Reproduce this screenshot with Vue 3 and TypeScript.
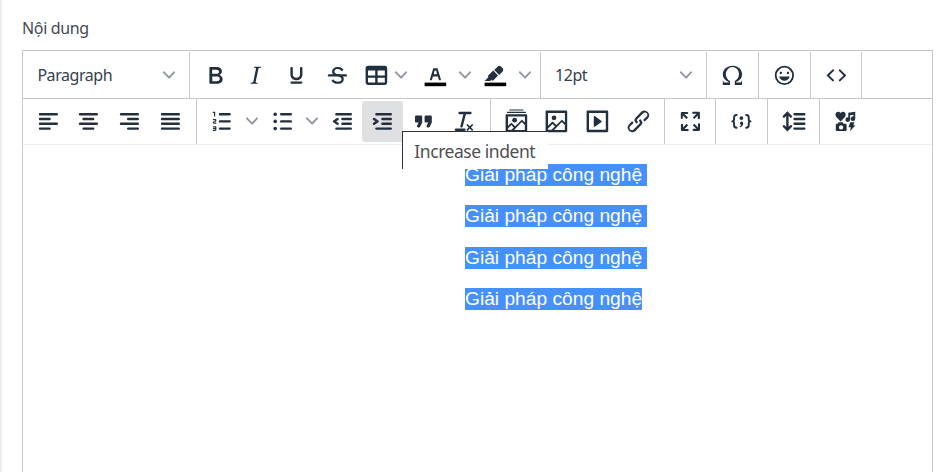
<script setup lang="ts">
interface Tool {
  kind: 'button' | 'split' | 'menu' | 'select'
  icon?: string
  label?: string
  active?: boolean
}

const icons: Record<string, string> = {
  bold: '<path d="M7.8 19c-.3 0-.5 0-.6-.2l-.2-.5V5.7c0-.2 0-.4.2-.5l.6-.2h5c1.5 0 2.7.3 3.5 1 .7.6 1.1 1.4 1.1 2.5a3 3 0 01-.6 1.9c-.4.6-1 1-1.6 1.2.4.1.9.3 1.3.6s.8.7 1 1.2c.4.4.5 1 .5 1.6 0 1.3-.4 2.3-1.3 3-.8.7-2.1 1-3.8 1H7.8zm5-8.3c.6 0 1.2-.1 1.6-.5.4-.3.6-.7.6-1.3 0-1.1-.8-1.7-2.3-1.7H9.3v3.5h3.4zm.5 6c.7 0 1.3-.1 1.7-.4.4-.4.6-.9.6-1.5s-.2-1-.7-1.4c-.4-.3-1-.4-2-.4H9.4v3.8h4z"/>',
  italic: '<path d="M16.7 4.7l-.1.9h-.3c-.6 0-1 0-1.4.3-.3.3-.4.6-.5 1.1l-2.1 9.8v.6c0 .5.4.8 1.4.8h.2l-.2.8H8l.2-.8h.2c1.1 0 1.8-.5 2-1.5l2-9.8.1-.5c0-.6-.4-.8-1.4-.8h-.3l.2-.9h5.8z"/>',
  underline: '<path d="M16 5c.6 0 1 .4 1 1v5.5a4 4 0 01-.4 1.8l-1 1.4a5.3 5.3 0 01-5.5 1 5 5 0 01-1.6-1c-.5-.4-.8-.9-1.1-1.4a4 4 0 01-.4-1.8V6c0-.6.4-1 1-1s1 .4 1 1v5.5c0 .3 0 .6.2 1l.6.7a3.3 3.3 0 002.2.8 3.4 3.4 0 002.2-.8c.3-.2.4-.5.6-.8l.2-.9V6c0-.6.4-1 1-1zM8 17h8c.6 0 1 .4 1 1s-.4 1-1 1H8a1 1 0 010-2z"/>',
  strike: '<path d="M15.6 8.5c-.5-.7-1-1.1-1.3-1.3-.6-.4-1.3-.6-2-.6-2.7 0-2.8 1.7-2.8 2.1 0 1.6 1.8 2 3.2 2.3 4.4.9 4.6 2.8 4.6 3.9 0 1.4-.7 4.1-5 4.1A6.2 6.2 0 017 16.4l1.5-1.1c.4.6 1.6 2 3.7 2 1.6 0 2.5-.4 3-1.2.4-.8.3-2-.8-2.6-.7-.4-1.6-.7-2.9-1-1-.2-3.9-.8-3.9-3.6C7.6 6 10.3 5 12.4 5c2.9 0 4.2 1.6 4.7 2.4l-1.5 1.1z"/><path d="M5 11h14a1 1 0 010 2H5a1 1 0 010-2z"/>',
  table: '<path d="M19 4a2 2 0 012 2v12a2 2 0 01-2 2H5a2 2 0 01-2-2V6c0-1.1.9-2 2-2h14zM5 14v4h6v-4H5zm14 0h-6v4h6v-4zm0-6h-6v4h6V8zM5 12h6V8H5v4z"/>',
  textColor: '<path fill="#000" d="M3 18h18v3H3z"/><path d="M8.7 16h-.8a.5.5 0 01-.5-.6l2.7-9c.1-.3.3-.4.5-.4h2.8c.2 0 .4.1.5.4l2.7 9a.5.5 0 01-.5.6h-.8a.5.5 0 01-.4-.4l-.7-2.2c0-.3-.3-.4-.5-.4h-3.4c-.2 0-.4.1-.5.4l-.7 2.2c0 .3-.2.4-.4.4zm2.6-7.6l-.6 2a.5.5 0 00.5.6h1.6a.5.5 0 00.5-.6l-.6-2c0-.3-.3-.4-.5-.4h-.4c-.2 0-.4.1-.5.4z"/>',
  highlight: '<path fill="#000" d="M3 18h18v3H3z"/><path d="M7.7 16.7H3l3.3-3.3-.7-.8L10.2 8l4 4.1-4 4.2c-.2.2-.6.2-.8 0l-.6-.7-1.1 1.1zm5-7.5L11 7.4l3-2.9a2 2 0 012.6 0L18 6c.7.7.7 2 0 2.7l-2.9 2.9-1.8-1.8-.5-.6"/>',
  omega: '<path d="M15 18h4l1-2v4h-6v-3.3l1.4-1a6 6 0 001.8-2.9 6.3 6.3 0 00-.1-4.1 5.8 5.8 0 00-3-3.2c-.6-.3-1.3-.5-2.1-.5a5.1 5.1 0 00-3.9 1.8 6.3 6.3 0 00-1.3 6 6.2 6.2 0 001.8 3l1.4.9V20H4v-4l1 2h4v-.5l-2-1L5.4 15A6.5 6.5 0 014 11c0-1 .2-1.9.6-2.7A7 7 0 016.3 6C7.1 5.4 8 5 9 4.5c1-.3 2-.5 3.1-.5a8.8 8.8 0 015.7 2 7 7 0 011.7 2.3 6 6 0 01.2 4.8c-.2.7-.6 1.3-1 1.9a7.6 7.6 0 01-3.6 2.5v.5z"/>',
  emoji: '<path d="M9 11c.6 0 1-.4 1-1s-.4-1-1-1a1 1 0 00-1 1c0 .6.4 1 1 1zm6 0c.6 0 1-.4 1-1s-.4-1-1-1a1 1 0 00-1 1c0 .6.4 1 1 1zm-3 5.5c2.1 0 4-1.5 4.400-3.500H7.600c.5 2 2.300 3.500 4.400 3.500z"/><path fill-rule="evenodd" d="M12 4a8 8 0 100 16 8 8 0 000-16zm0 14.5a6.500 6.500 0 110-13 6.500 6.500 0 010 13z"/>',
  source: '<path d="M9.8 15.7c.3.3.3.8 0 1-.3.4-.9.4-1.2 0l-4.4-4.1a.8.8 0 010-1.2l4.4-4.2c.3-.3.9-.3 1.2 0 .3.3.3.8 0 1.1L6 12l3.8 3.7zM14.2 15.7c-.3.3-.3.8 0 1 .4.4.9.4 1.2 0l4.4-4.1c.3-.3.3-.9 0-1.2l-4.4-4.2a.8.8 0 00-1.2 0c-.3.3-.3.8 0 1.1L18 12l-3.8 3.7z"/>',
  alignLeft: '<path d="M5 5h14a1 1 0 010 2H5a1 1 0 110-2zm0 4h8a1 1 0 010 2H5a1 1 0 110-2zm0 8h8a1 1 0 010 2H5a1 1 0 010-2zm0-4h14a1 1 0 010 2H5a1 1 0 010-2z"/>',
  alignCenter: '<path d="M5 5h14a1 1 0 010 2H5a1 1 0 110-2zm3 4h8a1 1 0 010 2H8a1 1 0 110-2zm0 8h8a1 1 0 010 2H8a1 1 0 010-2zm-3-4h14a1 1 0 010 2H5a1 1 0 010-2z"/>',
  alignRight: '<path d="M5 5h14a1 1 0 010 2H5a1 1 0 110-2zm6 4h8a1 1 0 010 2h-8a1 1 0 110-2zm0 8h8a1 1 0 010 2h-8a1 1 0 010-2zm-6-4h14a1 1 0 010 2H5a1 1 0 010-2z"/>',
  justify: '<path d="M5 5h14a1 1 0 010 2H5a1 1 0 110-2zm0 4h14a1 1 0 010 2H5a1 1 0 110-2zm0 4h14a1 1 0 010 2H5a1 1 0 010-2zm0 4h14a1 1 0 010 2H5a1 1 0 010-2z"/>',
  ordered: '<path d="M10 17h8c.6 0 1 .4 1 1s-.4 1-1 1h-8a1 1 0 010-2zm0-6h8c.6 0 1 .4 1 1s-.4 1-1 1h-8a1 1 0 010-2zm0-6h8c.6 0 1 .4 1 1s-.4 1-1 1h-8a1 1 0 110-2zM6 4v3.5c0 .3-.2.5-.5.5a.5.5 0 01-.5-.5V5h-.5a.5.5 0 010-1H6zm-1 8.8l.2.2h1.3c.3 0 .5.2.5.5s-.2.5-.5.5H4.9a1 1 0 01-.9-1V13c0-.4.3-.8.6-1l1.2-.4.2-.3a.2.2 0 00-.2-.2H4.5a.5.5 0 01-.5-.5c0-.3.2-.5.5-.5h1.6c.5 0 .9.4.9 1v.1c0 .4-.3.8-.6 1l-1.2.4-.2.3zM7 17v2c0 .6-.4 1-1 1H4.5a.5.5 0 010-1h1.2c.2 0 .3-.1.3-.3 0-.2-.1-.3-.3-.3H4.4a.4.4 0 110-.8h1.3c.2 0 .3-.1.3-.3 0-.2-.1-.3-.3-.3H4.5a.5.5 0 110-1H6c.6 0 1 .4 1 1z"/>',
  bullets: '<path d="M11 5h8a1 1 0 010 2h-8a1 1 0 010-2zm0 6h8a1 1 0 010 2h-8a1 1 0 010-2zm0 6h8a1 1 0 010 2h-8a1 1 0 010-2z"/><circle cx="6" cy="6" r="1.5"/><circle cx="6" cy="12" r="1.5"/><circle cx="6" cy="18" r="1.5"/>',
  outdent: '<path d="M7 5h12a1 1 0 010 2H7a1 1 0 110-2zm5 4h7a1 1 0 010 2h-7a1 1 0 010-2zm0 4h7a1 1 0 010 2h-7a1 1 0 010-2zm-5 4h12a1 1 0 010 2H7a1 1 0 010-2zm1.6-3.8a1 1 0 01-1.2 1.6l-3-2a1 1 0 010-1.6l3-2a1 1 0 011.2 1.6L6.8 12l1.8 1.2z"/>',
  indent: '<path d="M7 5h12a1 1 0 010 2H7a1 1 0 110-2zm5 4h7a1 1 0 010 2h-7a1 1 0 010-2zm0 4h7a1 1 0 010 2h-7a1 1 0 010-2zm-5 4h12a1 1 0 010 2H7a1 1 0 010-2zm-2.6-3.8L6.2 12l-1.8-1.2a1 1 0 011.2-1.6l3 2a1 1 0 010 1.6l-3 2a1 1 0 11-1.2-1.6z"/>',
  quote: '<path d="M7.5 17h.9c.4 0 .7-.2.9-.6L11 13V8c0-.6-.4-1-1-1H6a1 1 0 00-1 1v4c0 .6.4 1 1 1h2l-1.3 2.7a1 1 0 00.8 1.3zm8 0h.9c.4 0 .7-.2.9-.6L19 13V8c0-.6-.4-1-1-1h-4a1 1 0 00-1 1v4c0 .6.4 1 1 1h2l-1.3 2.7a1 1 0 00.8 1.3z"/>',
  clear: '<path d="M13.2 6a1 1 0 010 .2l-2.6 10a1 1 0 01-1 .8h-.2a.8.8 0 01-.8-1l2.6-10H8a1 1 0 110-2h9a1 1 0 010 2h-3.8zM5 18h7a1 1 0 010 2H5a1 1 0 010-2zm13 1.5L16.5 18 15 19.5a.7.7 0 01-1-1l1.5-1.5-1.5-1.5a.7.7 0 011-1l1.5 1.5 1.5-1.5a.7.7 0 011 1L17.5 17l1.5 1.5a.7.7 0 01-1 1z"/>',
  gallery: '<path fill-rule="evenodd" d="M5 15.7l2.3-2.2c.3-.3.7-.3 1 0L11 16l5.1-5c.3-.4.8-.4 1 0l2 1.9V8H5v7.7zM5 18V19h3l1.8-1.9-2-2L5 17.9zm14-3l-2.5-2.4-6.4 6.5H19v-4zM4 6h16c.6 0 1 .4 1 1v13c0 .6-.4 1-1 1H4a1 1 0 01-1-1V7c0-.6.4-1 1-1z"/><circle cx="10.5" cy="11" r="2"/><path d="M4.5 4h15a.5.5 0 110 1h-15a.5.5 0 010-1zm2-2h11a.5.5 0 110 1h-11a.5.5 0 010-1z"/>',
  image: '<path fill-rule="evenodd" d="M5 15.7l3.3-3.2c.3-.3.7-.3 1 0L12 15l4.1-4c.3-.4.8-.4 1 0l2 1.9V5H5v10.7zM5 18V19h3l2.8-2.9-2-2L5 17.9zm14-3l-2.5-2.4-6.4 6.5H19v-4zM4 3h16c.6 0 1 .4 1 1v16c0 .6-.4 1-1 1H4a1 1 0 01-1-1V4c0-.6.4-1 1-1z"/><circle cx="10" cy="9" r="2"/>',
  media: '<path fill-rule="evenodd" d="M4 3h16c.6 0 1 .4 1 1v16c0 .6-.4 1-1 1H4a1 1 0 01-1-1V4c0-.6.4-1 1-1zm1 2v14h14V5H5zm4.8 2.6l5.6 4a.5.5 0 010 .8l-5.6 4A.5.5 0 019 16V8a.5.5 0 01.8-.4z"/>',
  link: '<path d="M6.2 12.3a1 1 0 011.4 1.4l-2.1 2a2 2 0 102.7 2.8l4.8-4.8a1 1 0 000-1.4 1 1 0 111.4-1.3 2.9 2.9 0 010 4L9.6 20a3.9 3.9 0 01-5.5-5.5l2-2zm11.6-.6a1 1 0 01-1.4-1.4l2-2a2 2 0 10-2.6-2.8L11 10.3a1 1 0 000 1.4A1 1 0 119.6 13a2.9 2.9 0 010-4L14.4 4a3.9 3.9 0 015.5 5.5l-2 2z"/>',
  fullscreen: '<path d="M15.3 10l-1.2-1.3 2.9-3h-2.3a.9.9 0 110-1.7H19c.5 0 .9.4.9.9v4.4a.9.9 0 11-1.8 0V7l-2.9 3zm0 4l3 3v-2.3a.9.9 0 111.7 0V19c0 .5-.4.9-.9.9h-4.4a.9.9 0 110-1.8H17l-3-2.9 1.3-1.2zM10 15.4l-2.9 3h2.3a.9.9 0 110 1.7H5a.9.9 0 01-.9-.9v-4.4a.9.9 0 111.8 0V17l2.9-3 1.2 1.3zM8.7 10L5.7 7v2.3a.9.9 0 01-1.7 0V5c0-.5.4-.9.9-.9h4.4a.9.9 0 010 1.8H7l3 2.9-1.3 1.2z"/>',
  codeSample: '<g fill="none" stroke="currentColor" stroke-width="1.6" stroke-linecap="round" stroke-linejoin="round"><path d="M8 6.7c-1.4 0-2.1.8-2.1 2v1.6c0 1-.6 1.7-1.5 1.7.9 0 1.5.7 1.5 1.7v1.6c0 1.2.7 2 2.1 2M16 6.7c1.4 0 2.1.8 2.1 2v1.6c0 1 .6 1.7 1.5 1.7-.9 0-1.5.7-1.5 1.7v1.6c0 1.2-.7 2-2.1 2"/></g><circle cx="12" cy="9.3" r="1.5"/><path d="M12 12a1.5 1.5 0 011.5 1.6c0 1.6-.9 3-2.6 3.2-.5 0-.6-.6-.2-.8.7-.3 1-.7 1.1-1.1A1.5 1.5 0 0112 12z"/>',
  lineHeight: '<path d="M21 5a1 1 0 01.1 2H13a1 1 0 01-.1-2H21zm0 4a1 1 0 01.1 2H13a1 1 0 01-.1-2H21zm0 4a1 1 0 01.1 2H13a1 1 0 01-.1-2H21zm0 4a1 1 0 01.1 2H13a1 1 0 01-.1-2H21zM7 3.6l3.7 3.7a1 1 0 01-1.3 1.5h-.1L8 7.3v9.2l1.3-1.3a1 1 0 011.3 0h.1c.4.4.4 1 0 1.3v.1L7 20.4l-3.7-3.7a1 1 0 011.3-1.5h.1L6 16.7V7.4L4.7 8.7a1 1 0 01-1.3 0h-.1a1 1 0 010-1.3v-.1L7 3.6z"/>',
  assets: '<path d="M8 12L4.400 8.300C3 6.500 4 4 6 4c.9 0 1.600.5 2 1.200C8.400 4.500 9.100 4 10 4c2 0 3 2.500 1.600 4.300z"/><path d="M14.400 4.800L20.200 4v5.700a1.900 1.900 0 11-1.500-1.800V6.400l-2.800.4v3.700a1.900 1.900 0 11-1.500-1.800z"/><path fill-rule="evenodd" d="M6.300 12.800h3.400l.7 1.200h1.700c.5 0 .9.4.9.9v4.200c0 .5-.4.9-.9.9H4.900a.9.9 0 01-.9-.9v-4.200c0-.5.4-.9.9-.9h.7zM8.400 15.200a1.800 1.800 0 100 3.600 1.800 1.800 0 000-3.600z"/><path d="M16 12.800h3.600l-1 2.500h1.800L15.800 20.300l.8-3.500h-2z"/>',
}

const button = (icon: string, active = false): Tool => ({ kind: 'button', icon, active })
const split = (icon: string): Tool => ({ kind: 'split', icon })

const rows: Tool[][][] = [
  [
    [{ kind: 'select', label: 'Paragraph' }],
    [
      button('bold'),
      button('italic'),
      button('underline'),
      button('strike'),
      { kind: 'menu', icon: 'table' },
      split('textColor'),
      split('highlight'),
    ],
    [{ kind: 'select', label: '12pt' }],
    [button('omega')],
    [button('emoji')],
    [button('source')],
  ],
  [
    [button('alignLeft'), button('alignCenter'), button('alignRight'), button('justify')],
    [split('ordered'), split('bullets'), button('outdent'), button('indent', true), button('quote'), button('clear')],
    [button('gallery'), button('image'), button('media'), button('link')],
    [button('fullscreen')],
    [button('codeSample')],
    [button('lineHeight')],
    [button('assets')],
  ],
]

const lines: string[] = [
  'Giải pháp công nghệ ',
  'Giải pháp công nghệ ',
  'Giải pháp công nghệ ',
  'Giải pháp công nghệ',
]
</script>

<template>
  <main class="page">
    <div class="field-label">Nội dung</div>
    <section class="editor">
      <div v-for="(row, r) in rows" :key="r" class="toolbar">
        <div v-for="(group, g) in row" :key="g" class="group">
          <div v-for="(tool, t) in group" :key="t" class="tool" :class="[tool.kind, { active: tool.active }]">
            <span v-if="tool.label" class="select-label">{{ tool.label }}</span>
            <span v-if="tool.icon" class="icon-box">
              <svg class="icon" viewBox="0 0 24 24" v-html="icons[tool.icon]"></svg>
            </span>
            <span v-if="tool.kind !== 'button'" class="chevron-box">
              <svg class="chevron" viewBox="0 0 10 10">
                <path d="M8.7 2.2c.3-.3.8-.3 1 0 .4.4.4.9 0 1.2L5.7 7.8c-.3.3-.9.3-1.2 0L.2 3.4a.8.8 0 010-1.2c.3-.3.8-.3 1.1 0L5 6l3.7-3.8z" />
              </svg>
            </span>
            <span v-if="tool.active" class="tooltip">Increase indent</span>
          </div>
        </div>
      </div>
      <div class="content">
        <p v-for="(line, i) in lines" :key="i"><span class="selected">{{ line }}</span></p>
      </div>
    </section>
  </main>
</template>

<style>
body {
  margin: 0;
  background: #fff;
}
</style>

<style scoped>
.page {
  box-sizing: border-box;
  height: 472px;
  overflow: hidden;
  padding: 16px 11px 0 20px;
  border-left: 2px solid #ededed;
  font-family: "Noto Sans", "Open Sans", sans-serif;
  color: #222f3e;
}
.field-label {
  height: 34px;
  line-height: 24px;
  font-size: 16px;
  letter-spacing: -0.35px;
  color: #454950;
}
.editor {
  box-sizing: border-box;
  height: 440px;
  border: 1px solid #c8c8c8;
}
.toolbar {
  display: flex;
  box-sizing: border-box;
  height: 48px;
  padding-top: 1px;
  border-bottom: 1px solid #c8c8c8;
}
.toolbar + .toolbar {
  height: 46px;
  padding-top: 0;
  border-bottom-color: #eee;
}
.group {
  display: flex;
  align-items: center;
  padding: 0 5.05px 0 4.8px;
  border-right: 1px solid #c8c8c8;
}
.toolbar + .toolbar .group:first-child {
  padding: 0 5.1px 0 4.5px;
}
.group:last-child:not(:nth-child(6)) {
  border-right: 0;
}
.tool {
  position: relative;
  display: flex;
  align-items: center;
  height: 40.8px;
  border-radius: 3px;
}
.active {
  background: #dee0e2;
}
.icon-box {
  display: flex;
  justify-content: center;
  width: 40.8px;
}
.icon {
  width: 28.8px;
  height: 28.8px;
  fill: currentColor;
}
.chevron-box {
  display: flex;
  justify-content: center;
  width: 19.2px;
}
.chevron {
  width: 12px;
  height: 12px;
  fill: #222f3e;
  opacity: 0.5;
}
.menu .icon-box {
  width: 37.6px;
}
.menu .chevron-box {
  width: 12px;
  padding-right: 7.2px;
}
.select {
  box-sizing: border-box;
  width: 156px;
  padding: 0 9px 0 9.6px;
  justify-content: space-between;
  font-size: 16px;
}
.select .chevron-box {
  width: 12px;
}
.select-label {
  letter-spacing: -0.45px;
  color: #35404e;
}
.tooltip {
  position: absolute;
  z-index: 2;
  top: 30px;
  left: 40px;
  box-sizing: border-box;
  width: 146px;
  height: 38px;
  padding-left: 11px;
  border-top: 1px solid #333;
  border-left: 1px solid #333;
  background: #fff;
  color: #505050;
  font-size: 17.5px;
  letter-spacing: -0.45px;
  line-height: 38px;
  white-space: nowrap;
}
.content {
  padding: 19px 0 0 442px;
  font-family: "Liberation Sans", Arial, sans-serif;
  font-size: 19.2px;
}
.content p {
  height: 22px;
  margin: 0 0 19.4px;
  line-height: 22px;
  white-space: pre;
}
.selected {
  display: inline-block;
  background: #4690fb;
  color: #fff;
}
</style>
